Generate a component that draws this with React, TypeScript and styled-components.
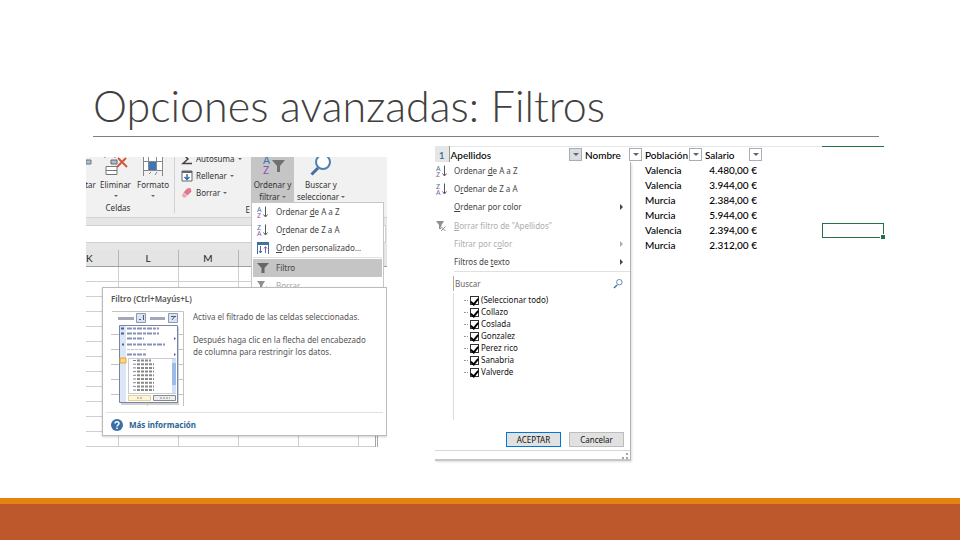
import React from "react";
import styled, { createGlobalStyle } from "styled-components";

const Global = createGlobalStyle`
  * { box-sizing: border-box; }
  html, body, #root { height: 100%; }
  body { margin: 0; background: #fff; font-family: "Noto Sans", sans-serif; font-size: 8px; line-height: 12px; color: #333; }
  button, input { font: inherit; color: inherit; margin: 0; padding: 0; border: 0; background: none; }
  svg { display: block; flex: none; }
  p, h1, h2, ul { margin: 0; padding: 0; }
  ul { list-style: none; }
  table { border-collapse: collapse; table-layout: fixed; width: 100%; }
  th, td { padding: 0; font-weight: inherit; text-align: left; }
`;

const Slide = styled.div`
  min-height: 100%;
  display: flex;
  flex-direction: column;
`;

const Header = styled.header`
  margin: 78px 81px 0 93px;
  height: 59px;
  border-bottom: 1px solid #7f7f7f;
`;

const Title = styled.h1`
  font: 300 43px/56px Lato, sans-serif;
  color: #404040;
`;

const Figures = styled.main`
  flex: 1;
  display: grid;
  grid-template-columns: 301fr 449fr;
  gap: 48px;
  align-items: start;
  padding: 9px 76px 0 86px;
`;

const Footer = styled.footer`
  height: 42px;
  background: #bd582c;
  border-top: 6px solid #e48312;
`;

/* ---------- ribbon and worksheet ---------- */

const Worksheet = styled.section`
  position: relative;
  margin-top: 11px;
  height: 292px;
  overflow: hidden;
`;

const Ribbon = styled.div`
  height: 61px;
  display: flex;
  background: #f1f1f1;
  border-bottom: 1px solid #d2d2d2;
  color: #333;
`;

const CellsGroup = styled.div`
  width: 89px;
  display: flex;
  flex-direction: column;
  border-right: 1px solid #d2d2d2;
  margin-bottom: 4px;
`;

const CellsTools = styled.div`
  display: flex;
  gap: 4px;
  height: 48px;
`;

const GroupName = styled.span`
  text-align: center;
  padding-right: 24px;
  line-height: 14px;
`;

const BigTool = styled.button<{ $active?: boolean; $width: number }>`
  width: ${(p) => p.$width}px;
  display: flex;
  flex-direction: column;
  align-items: center;
  justify-content: flex-start;
  white-space: nowrap;
  background: ${(p) => (p.$active ? "#c5c5c5" : "transparent")};
`;

const ToolIcon = styled.span`
  height: 22px;
`;

const ToolCaption = styled.span`
  display: flex;
  align-items: center;
  gap: 2px;
`;

const Caret = styled.i`
  border: 2px solid transparent;
  border-top-color: #666;
  border-bottom: 0;
`;

const CaretRow = styled.span`
  height: 10px;
  display: flex;
  align-items: center;
`;

const EditGroup = styled.div`
  width: 76px;
  padding-left: 6px;
  display: flex;
  flex-direction: column;
  gap: 5px;
  overflow: hidden;
`;

const SmallTool = styled.button`
  height: 12px;
  display: flex;
  align-items: center;
  gap: 3px;
  &:first-child { margin-top: -4px; }
`;

const EditName = styled.span`
  text-align: right;
  padding-right: 1px;
`;

const FormulaBar = styled.div`
  height: 32px;
  padding: 7px 1px 7px 0;
  background: #e6e6e6;
  div { height: 18px; background: #fff; border: 1px solid #d0d0d0; border-left: 0; }
`;

const SheetGrid = styled.table`
  th { height: 16px; background: #e4e4e4; border-bottom: 1px solid #9f9f9f; border-right: 1px solid #b5b5b5; text-align: center; font: 10px/16px Lato, sans-serif; color: #222; }
  td { height: 15px; border-bottom: 1px solid #cfcfcf; border-right: 1px solid #cfcfcf; }
  th:last-child { border-right: 0; }
  th:first-child { text-align: left; }
  td:nth-child(6) { border-right: 3px double #a5a5a5; }
  td:last-child { border: 0; }
`;

const SortMenu = styled.div`
  position: absolute;
  top: 45px;
  left: 165px;
  width: 133px;
  height: 90px;
  overflow: hidden;
  background: #fff;
  border: 1px solid #c6c6c6;
  padding: 0 1px;
`;

const SortItem = styled.button<{ $on?: boolean; $off?: boolean }>`
  width: 100%;
  height: 18px;
  display: flex;
  align-items: center;
  gap: 6px;
  padding-left: 3px;
  white-space: nowrap;
  color: ${(p) => (p.$off ? "#a6a6a6" : "#444")};
  background: ${(p) => (p.$on ? "#c5c5c5" : "transparent")};
`;

const Rule = styled.hr`
  margin: 0;
  border: 0;
  border-top: 1px solid #e0e0e0;
`;

const MenuRule = styled(Rule)`
  margin-bottom: 1px;
`;

const Tooltip = styled.div`
  position: absolute;
  top: 130px;
  left: 16px;
  width: 285px;
  height: 149px;
  background: #fff;
  border: 1px solid #bbb;
  box-shadow: 0 1px 2px #0003;
  padding: 5px 3px 0;
  color: #555;
`;

const TipTitle = styled.h2`
  font-size: 8px;
  line-height: 12px;
  font-weight: 600;
  padding-left: 5px;
`;

const TipBody = styled.div`
  display: flex;
  gap: 9px;
  height: 107px;
  padding: 6px 0 0 5px;
`;

const TipText = styled.div`
  display: grid;
  gap: 11px;
  align-content: start;
  line-height: 12px;
  white-space: nowrap;
`;

const TipLink = styled.a`
  display: flex;
  align-items: center;
  gap: 5px;
  height: 23px;
  padding-left: 4px;
  font-weight: 700;
  color: #2b6592;
  text-decoration: none;
`;

/* ---------- filter panel and data ---------- */

const FilterFigure = styled.section`
  position: relative;
  height: 316px;
`;

const DataTable = styled.table`
  font: 500 10px/14px Lato, sans-serif;
  color: #000;
  white-space: nowrap;
  tr { height: 15px; }
  th { height: 16px; }
  td { height: 15px; padding-left: 1px; }
`;

const HeadCell = styled.th<{ $lined?: boolean; $mark?: boolean }>`
  border-top: 1px solid ${(p) => (p.$mark ? "#217346" : "#e3e6ea")};
  border-bottom: ${(p) => (p.$lined ? "1px solid #b0b0b0" : "0")};
`;

const RowNumber = styled(HeadCell)`
  background: #e6e6e6;
  color: #2b6592;
  border-right: 1px solid #999;
  && { text-align: center; }
`;

const HeadLabel = styled.span`
  display: flex;
  align-items: center;
  justify-content: space-between;
  padding: 0 2px 0 1px;
`;

const DropButton = styled.button<{ $pressed?: boolean }>`
  width: 13px;
  height: 13px;
  margin-left: -4px;
  flex: none;
  display: grid;
  place-items: center;
  border: 1px solid #a9aeb5;
  background: ${(p) => (p.$pressed ? "#d9dce2" : "#fff")};
  ${Caret} { border-width: 3px 3px 0; }
`;

const Amount = styled.td`
  && { text-align: right; padding-right: 7px; }
`;

const ActiveCell = styled.td`
  position: relative;
  outline: 1px solid #217346;
  outline-offset: -1px;
  &::after { content: ""; position: absolute; right: -1px; bottom: -1px; width: 4px; height: 4px; background: #217346; border: 1px solid #fff; border-width: 1px 0 0 1px; }
`;

const FilterPanel = styled.div`
  position: absolute;
  top: 16px;
  left: 0;
  width: 196px;
  height: 299px;
  display: flex;
  flex-direction: column;
  background: #fff;
  border-right: 1px solid #b5b5b5;
  border-bottom: 2px solid #c6c6c6;
  box-shadow: 1px 1px 2px #0002;
`;

const FilterItem = styled.button<{ $off?: boolean; $tall?: boolean }>`
  height: ${(p) => (p.$tall ? 19 : 18)}px;
  display: grid;
  grid-template-columns: 19px 1fr 10px;
  align-items: center;
  text-align: left;
  white-space: nowrap;
  color: ${(p) => (p.$off ? "#adadad" : "#444")};
`;

const Arrow = styled.i`
  width: 0;
  border: 3px solid transparent;
  border-left: 3px solid currentColor;
  border-right: 0;
`;

const PanelRule = styled(Rule)`
  margin-left: 19px;
`;

const SearchBox = styled.label`
  height: 15px;
  margin: 4px 7px 2px 18px;
  display: flex;
  align-items: center;
  border-left: 1px solid #b9a88c;
  input { flex: 1; min-width: 0; outline: 0; padding-left: 1px; }
  input::placeholder { color: #666; opacity: 1; }
`;

const ValueList = styled.ul`
  height: 127px;
  margin-left: 18px;
  padding: 1px 0 0 10px;
  border-left: 1px solid #dcdcdc;
`;

const ValueLabel = styled.label`
  height: 12px;
  display: flex;
  align-items: center;
  gap: 2px;
  color: #111;
  &::before { content: ""; width: 4px; border-top: 1px dotted #999; }
`;

const Tick = styled.input`
  appearance: none;
  width: 9px;
  height: 9px;
  display: grid;
  place-items: center;
  border: 1px solid #333;
  background: #fff;
  &:checked::after { content: ""; width: 3px; height: 6px; border: solid #000; border-width: 0 2px 2px 0; transform: rotate(40deg); }
`;

const Actions = styled.div`
  display: flex;
  justify-content: flex-end;
  gap: 8px;
  margin-top: auto;
  padding: 0 6px 3px;
  border-bottom: 1px solid #d6d6d6;
`;

const ActionButton = styled.button<{ $main?: boolean }>`
  width: 55px;
  height: 15px;
  background: #e1e1e1;
  border: 1px solid ${(p) => (p.$main ? "#0078d7" : "#bcbcbc")};
  color: #111;
`;

const Grip = styled.div`
  height: 8px;
  display: flex;
  justify-content: flex-end;
  padding: 2px 2px 0;
`;

/* ---------- icons ---------- */

const SortIcon = ({ first, last }: { first: string; last: string }) => (
  <svg width="14" height="14" viewBox="0 0 14 14">
    <text x="1" y="7" fontSize="7" fill="#44709d">{first}</text>
    <text x="1" y="13" fontSize="7" fill="#8a5aa8">{last}</text>
    <path d="M9.5 1.5v10M7.5 9.5l2 2.5 2-2.5" fill="none" stroke="#555" />
  </svg>
);

const Funnel = ({ color = "#666" }: { color?: string }) => (
  <svg width="14" height="12" viewBox="0 0 14 12">
    <path d="M1 1h12L8.500 6v5h-3V6z" fill={color} />
  </svg>
);

const ClearFunnel = () => (
  <svg width="14" height="12" viewBox="0 0 14 12">
    <path d="M1 1h8L6.500 5v4H4V5z" fill="#8f8f8f" />
    <path d="M6 6.500l4.500 4.500M10.500 6.500L6 11" stroke="#fff" strokeWidth="2" />
    <path d="M6 6.500l4.500 4.500M10.500 6.500L6 11" stroke="#8f8f8f" />
  </svg>
);

const CustomSortIcon = () => (
  <svg width="14" height="14" viewBox="0 0 14 14">
    <path d="M1 1h12v3H1z" fill="#44709d" />
    <path d="M1.500 3v10M12.500 3v10M4.500 5v7M3 10l1.500 2L6 10" fill="none" stroke="#44709d" />
    <path d="M9.500 12V6M8 7.500L9.500 5.500 11 7.500" fill="none" stroke="#8a5aa8" />
  </svg>
);

const Lens = ({ size }: { size: number }) => (
  <svg width={size} height={size} viewBox="0 0 22 22">
    <path d="M2 20l7-7" stroke="#44709d" strokeWidth="3" />
    <circle cx="14" cy="7" r="6" fill="#fff" stroke="#4f81b0" strokeWidth="2" />
  </svg>
);

const BigLens = () => (
  <svg width="22" height="20" viewBox="0 0 22 20">
    <path d="M1.500 17.500L8 11" stroke="#44709d" strokeWidth="3" />
    <circle cx="13" cy="5" r="7" fill="#fff" stroke="#4f81b0" strokeWidth="2" />
  </svg>
);

const DeleteIcon = () => (
  <svg width="24" height="20" viewBox="0 0 24 20">
    <path d="M1 0v1M11 0v1M2 9.500h11v8H2zM2 13.500h11" fill="#fff" stroke="#777" />
    <path d="M7 3h6v4H7z" fill="#a9bfd4" stroke="#666" />
    <path d="M14 1l9 9M22 1l-9 9" stroke="#d0583f" strokeWidth="2" />
  </svg>
);

const FormatIcon = () => (
  <svg width="22" height="20" viewBox="0 0 22 20">
    <path d="M1 0h20v14H1z" fill="#fff" />
    <path d="M1.500 0v19M6.500 0v14M14.500 0v14M20.500 0v19M1 4.500h20M1 13.500h20M7 17l2-2M15 15l-2 3" fill="none" stroke="#888" />
    <path d="M7 5h7v8H7z" fill="#3f77b4" />
  </svg>
);

const InsertEdge = () => (
  <svg width="9" height="20" viewBox="0 0 9 20"><path d="M0 3h5v4H0z" fill="#a9bfd4" stroke="#777" /></svg>
);

const SigmaIcon = () => (
  <svg width="12" height="12" viewBox="0 0 12 12"><path d="M11 1H2l5 5-5 4.500h9" fill="none" stroke="#444" strokeWidth="1.500" /></svg>
);

const FillIcon = () => (
  <svg width="12" height="12" viewBox="0 0 12 12">
    <path d="M1 1h10v10H1z" fill="#fff" stroke="#666" />
    <path d="M1 2h10" stroke="#666" strokeWidth="2" />
    <path d="M6 4v5M3.500 7L6 9.500 8.500 7" fill="none" stroke="#2f6faf" strokeWidth="1.500" />
  </svg>
);

const EraserIcon = () => (
  <svg width="12" height="12" viewBox="0 0 12 12">
    <path d="M6 1.500L9.500 1l1 3.500-4 4-4-3z" fill="#e0788a" />
    <path d="M2.500 6l3.500 3-1.500 1.500H2L1 8z" fill="#eda5b0" />
  </svg>
);

const BigSortIcon = () => (
  <svg width="26" height="20" viewBox="0 0 26 20">
    <text x="3" y="7" fontSize="11" fill="#3f77b4">A</text>
    <text x="3" y="17" fontSize="11" fill="#8f4fb0">Z</text>
    <path d="M12 3h13l-5 6v6h-3V9z" fill="#707070" />
  </svg>
);

const HelpIcon = () => (
  <svg width="14" height="14" viewBox="0 0 14 14">
    <circle cx="7" cy="7" r="6" fill="#3a6ea5" />
    <path d="M5 5.500C5 3 9 3 9 5.500 9 7 7 7 7 8.500M7 9.500V11" fill="none" stroke="#fff" strokeWidth="1.500" />
  </svg>
);

const previewRows = [0, 1, 2, 3, 4, 5, 6, 7, 8];

const PreviewIcon = () => (
  <svg width="73" height="96" viewBox="0 0 73 96">
    <path d="M1 .5h71.500V95M0 23.500h10M0 38.500h10M0 53.500h10M0 68.500h10M0 83.500h10M67 23.500h5M67 38.500h5M67 53.500h5M67 68.500h5M67 83.500h5M36.500 91v4" fill="none" stroke="#c3c3c3" />
    <path d="M7 7.500h16M39 7.500h15" stroke="#a4a9b8" strokeWidth="3" />
    <path d="M25.500 2.500h9v9h-9zM57.500 2.500h9v9h-9z" fill="#dbe3f0" stroke="#8d9ab5" />
    <path d="M28 8.500h2M32.500 4v5M60 5.500h5M61 9l3-4" stroke="#4a5c88" fill="none" />
    <path d="M10 16h58v78H10z" fill="#d0d0d0" />
    <path d="M8.500 14.500h58v77h-58z" fill="#fff" stroke="#7485a7" />
    <path d="M9 15h6v76H9z" fill="#dce6f4" />
    <path d="M16 17.500h32M16 22.500h32M16 27.500h17M16 33.500h38M16 43.500h20" stroke="#8592b5" strokeWidth="2" strokeDasharray="5 1 3 1" />
    <path d="M16 38.500h20" stroke="#bcc3cf" strokeDasharray="3 1" />
    <path d="M10 17.500h3M10 22.500h3M11 33.500h2" stroke="#4c6298" strokeWidth="2" />
    <path d="M63 26l2 1.500-2 1.500zM63 42l2 1.500-2 1.500z" fill="#4c6298" />
    <path d="M9 47h6v5H9z" fill="#ffd77a" stroke="#dca740" />
    <path d="M17.500 47.500h47v35h-47z" fill="#fff" stroke="#c5cbd6" />
    {previewRows.map((r) => (
      <g key={r}>
        <path d={`M22 ${49.5 + r * 3.7}h3`} stroke="#888" />
        <path d={`M26 ${49.5 + r * 3.7}h${r === 0 ? 14 : 17}`} stroke="#888" strokeWidth="2" strokeDasharray="3 1" />
      </g>
    ))}
    <path d="M61 48h4v34h-4z" fill="#cfe0f8" />
    <path d="M61 52h4v22h-4z" fill="#9ebbe8" />
    <path d="M17.500 84.500h22v5h-22z" fill="#fff5d9" stroke="#e2cf9c" />
    <path d="M42.500 84.500h22v5h-22z" fill="#eee" stroke="#888" />
    <path d="M26 87h5M49 87h10" stroke="#888" strokeDasharray="2 1" />
  </svg>
);

const GripIcon = () => (
  <svg width="6" height="6" viewBox="0 0 6 6"><path d="M4 0h2v2H4zM4 4h2v2H4zM0 4h2v2H0z" fill="#a5a5a5" /></svg>
);

/* ---------- data ---------- */

const people = [
  ["Valencia", "4.480,00 €"],
  ["Valencia", "3.944,00 €"],
  ["Murcia", "2.384,00 €"],
  ["Murcia", "5.944,00 €"],
  ["Valencia", "2.394,00 €"],
  ["Murcia", "2.312,00 €"],
];
const surnames = ["(Seleccionar todo)", "Collazo", "Coslada", "Gonzalez", "Perez rico", "Sanabria", "Valverde"];
const sheetColumns = ["K", "L", "M", "", "", "", ""];
const sheetRows = Array.from({ length: 12 }, (_, i) => i);

const SheetFigure = () => (
  <Worksheet>
    <Ribbon>
      <CellsGroup>
        <CellsTools>
          <BigTool $width={9}><ToolIcon><InsertEdge /></ToolIcon><ToolCaption>tar</ToolCaption></BigTool>
          <BigTool $width={33}><ToolIcon><DeleteIcon /></ToolIcon><ToolCaption>Eliminar</ToolCaption><CaretRow><Caret /></CaretRow></BigTool>
          <BigTool $width={34}><ToolIcon><FormatIcon /></ToolIcon><ToolCaption>Formato</ToolCaption><CaretRow><Caret /></CaretRow></BigTool>
        </CellsTools>
        <GroupName>Celdas</GroupName>
      </CellsGroup>
      <EditGroup>
        <SmallTool><SigmaIcon />Autosuma <Caret /></SmallTool>
        <SmallTool><FillIcon />Rellenar<Caret /></SmallTool>
        <SmallTool><EraserIcon />Borrar<Caret /></SmallTool>
        <EditName>E</EditName>
      </EditGroup>
      <BigTool $width={43} $active><ToolIcon><BigSortIcon /></ToolIcon><span>Ordenar y</span><ToolCaption>filtrar<Caret /></ToolCaption></BigTool>
      <BigTool $width={54}><ToolIcon><BigLens /></ToolIcon><span>Buscar y</span><ToolCaption>seleccionar<Caret /></ToolCaption></BigTool>
    </Ribbon>
    <FormulaBar><div /></FormulaBar>
    <SheetGrid>
      <colgroup>
        <col width="32" /><col width="60" /><col width="60" /><col width="60" /><col width="60" /><col width="18" /><col />
      </colgroup>
      <thead><tr>{sheetColumns.map((c, i) => <th key={i}>{c}</th>)}</tr></thead>
      <tbody>{sheetRows.map((r) => <tr key={r}>{sheetColumns.map((_, i) => <td key={i} />)}</tr>)}</tbody>
    </SheetGrid>
    <SortMenu>
      <SortItem><SortIcon first="A" last="Z" /><span>Ordenar <u>d</u>e A a Z</span></SortItem>
      <SortItem><SortIcon first="Z" last="A" /><span>O<u>r</u>denar de Z a A</span></SortItem>
      <SortItem><CustomSortIcon /><span><u>O</u>rden personalizado...</span></SortItem>
      <MenuRule />
      <SortItem $on><Funnel /><span>Filtro</span></SortItem>
      <SortItem $off><ClearFunnel /><span>Borrar</span></SortItem>
    </SortMenu>
    <Tooltip role="tooltip">
      <TipTitle>Filtro (Ctrl+Mayús+L)</TipTitle>
      <TipBody>
        <PreviewIcon />
        <TipText>
          <p>Activa el filtrado de las celdas seleccionadas.</p>
          <p>Después haga clic en la flecha del encabezado<br />de columna para restringir los datos.</p>
        </TipText>
      </TipBody>
      <Rule />
      <TipLink href="#ayuda"><HelpIcon />Más información</TipLink>
    </Tooltip>
  </Worksheet>
);

const Drop = ({ label, pressed }: { label: string; pressed?: boolean }) => (
  <DropButton $pressed={pressed} aria-label={label}><Caret /></DropButton>
);

const FilterView = () => (
  <FilterFigure>
    <DataTable>
      <colgroup>
        <col width="14" /><col width="135" /><col width="60" /><col width="60" /><col width="60" /><col width="58" /><col />
      </colgroup>
      <thead>
        <tr>
          <RowNumber $lined>1</RowNumber>
          <HeadCell $lined><HeadLabel>Apellidos<Drop label="Filtrar Apellidos" pressed /></HeadLabel></HeadCell>
          <HeadCell><HeadLabel>Nombre<Drop label="Filtrar Nombre" /></HeadLabel></HeadCell>
          <HeadCell><HeadLabel>Población<Drop label="Filtrar Población" /></HeadLabel></HeadCell>
          <HeadCell><HeadLabel>Salario<Drop label="Filtrar Salario" /></HeadLabel></HeadCell>
          <HeadCell />
          <HeadCell $mark />
        </tr>
      </thead>
      <tbody>
        {people.map(([city, pay], i) => (
          <tr key={i}>
            <td /><td /><td /><td>{city}</td><Amount>{pay}</Amount><td />
            {i === 4 ? <ActiveCell /> : <td />}
          </tr>
        ))}
      </tbody>
    </DataTable>
    <FilterPanel>
      <FilterItem><SortIcon first="A" last="Z" /><span>Ordenar <u>d</u>e A a Z</span></FilterItem>
      <FilterItem><SortIcon first="Z" last="A" /><span>O<u>r</u>denar de Z a A</span></FilterItem>
      <FilterItem><i /><span><u>O</u>rdenar por color</span><Arrow /></FilterItem>
      <FilterItem $off $tall><ClearFunnel /><span><u>B</u>orrar filtro de "Apellidos"</span></FilterItem>
      <FilterItem $off><i /><span>Filtrar por c<u>o</u>lor</span><Arrow /></FilterItem>
      <FilterItem><i /><span>Filtros de <u>t</u>exto</span><Arrow /></FilterItem>
      <PanelRule />
      <SearchBox><input placeholder="Buscar" aria-label="Buscar" /><Lens size={10} /></SearchBox>
      <ValueList>
        {surnames.map((s) => (
          <li key={s}><ValueLabel><Tick type="checkbox" defaultChecked />{s}</ValueLabel></li>
        ))}
      </ValueList>
      <Actions>
        <ActionButton $main>ACEPTAR</ActionButton>
        <ActionButton>Cancelar</ActionButton>
      </Actions>
      <Grip><GripIcon /></Grip>
    </FilterPanel>
  </FilterFigure>
);

export default function App() {
  return (
    <>
      <Global />
      <Slide>
        <Header><Title>Opciones avanzadas: Filtros</Title></Header>
        <Figures>
          <SheetFigure />
          <FilterView />
        </Figures>
        <Footer />
      </Slide>
    </>
  );
}
